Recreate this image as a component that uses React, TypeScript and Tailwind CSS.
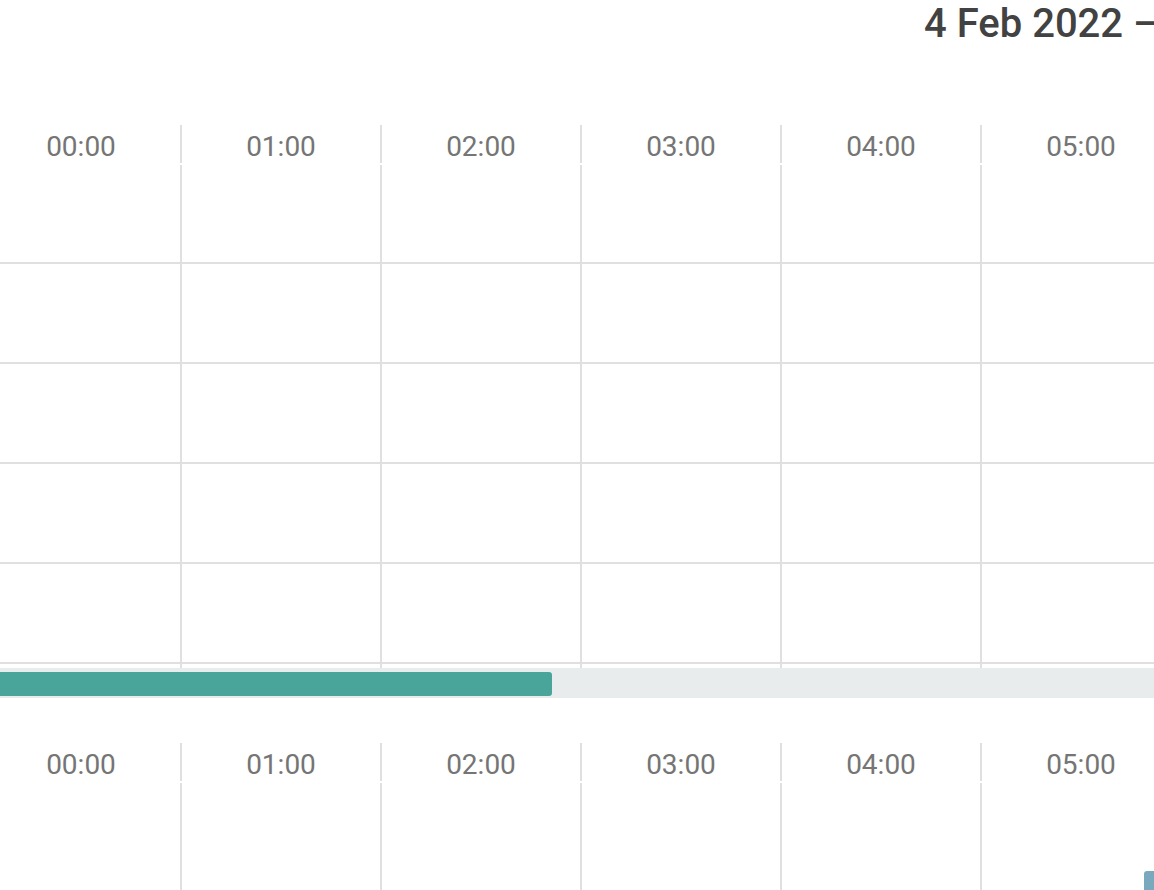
import React from 'react';

// 时间轴：每列 200px，首列向左滚出 18px
const HOURS = ['00:00', '01:00', '02:00', '03:00', '04:00', '05:00'];
const ROWS = [99, 100, 100, 100, 100];

const HeaderRow: React.FC = () => (
  <div className="flex h-[38px]">
    {HOURS.map(h => (
      <div
        key={h}
        className="w-[200px] shrink-0 h-[38px] border-r-2 border-[#e0e0e0] text-center text-[28px] leading-[43px] text-[#757575]"
      >
        {h}
      </div>
    ))}
  </div>
);

const Day: React.FC<{ rows: number[]; event?: boolean; tail?: boolean }> = ({ rows, event, tail }) => (
  <div className="flex flex-col">
    {rows.map((h, i) => (
      <div
        key={i}
        className={`flex ${tail ? '' : 'border-b-2 border-[#e0e0e0]'} -mr-[40px] pr-[40px]`}
        style={{ height: h }}
      >
        {HOURS.map((hr, j) => (
          <div key={hr} className="relative w-[200px] shrink-0 h-full border-r-2 border-[#e0e0e0]">
            {event && i === 0 && j === HOURS.length - 1 && (
              <div className="absolute left-[162px] top-[88px] w-[14px] h-[20px] rounded-tl-[3px] bg-[#7aa9be]" />
            )}
          </div>
        ))}
      </div>
    ))}
  </div>
);

export default function App() {
  return (
    <div
      className="w-[1154px] h-[890px] overflow-hidden bg-white"
      style={{ fontFamily: 'Roboto, "Liberation Sans", sans-serif' }}
    >
      {/* 日期标题（右侧超出视口被裁掉） */}
      <div className="h-[48px] pl-[924px] whitespace-nowrap text-[40px] font-medium leading-[48px] text-[#424242]">
        4 Feb 2022 –
      </div>

      {/* 第一段 */}
      <div className="mt-[77px] -ml-[18px] w-[1300px]">
        <HeaderRow />
        <div className="mt-[2px]">
          <Day rows={ROWS} />
          <Day rows={[4]} tail />
        </div>
      </div>

      {/* 进度条 */}
      <div className="h-[30px] bg-[#e9eced] pt-[4px] pb-[2px]">
        <div className="h-full w-[552px] rounded-r-[3px] bg-[#49a59a]" />
      </div>

      {/* 第二段 */}
      <div className="mt-[45px] -ml-[18px] w-[1300px]">
        <HeaderRow />
        <div className="mt-[2px]">
          <Day rows={[120]} event tail />
        </div>
      </div>
    </div>
  );
}
